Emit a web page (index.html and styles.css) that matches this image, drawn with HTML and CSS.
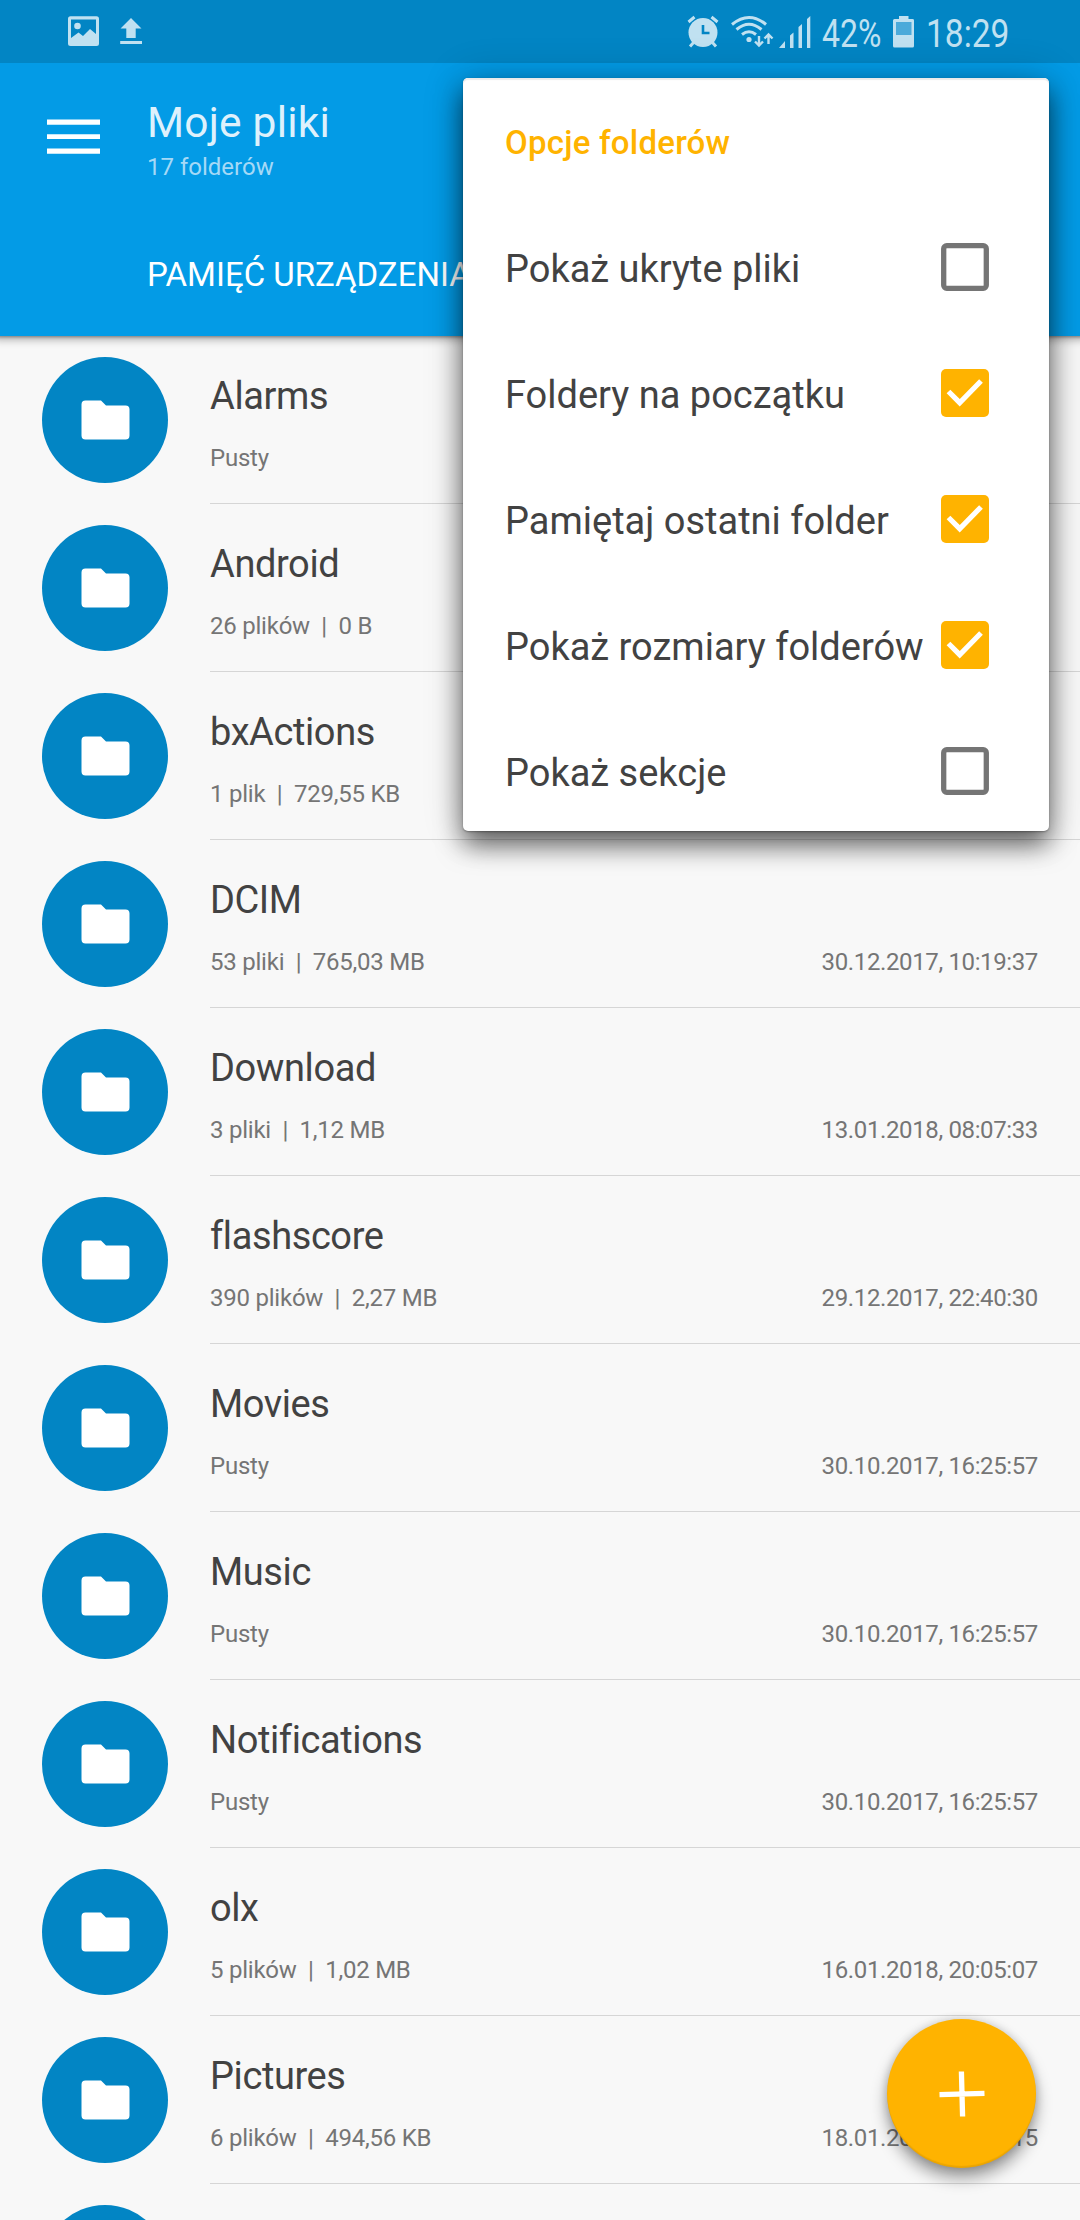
FILE: index.html
```html
<!DOCTYPE html>
<html lang="pl">
<head>
<meta charset="utf-8">
<title>Moje pliki</title>
<link rel="stylesheet" href="styles.css">
</head>
<body>
<svg class="defs" width="0" height="0">
  <symbol id="folder" viewBox="0 0 49 40"><path d="M4.500 0.500H20L25 5.500H44.500a4 4 0 0 1 4 4V35.500a4 4 0 0 1-4 4H4.500a4 4 0 0 1-4-4V4.500a4 4 0 0 1 4-4z"/></symbol>
  <symbol id="box-off" viewBox="0 0 48 48"><rect x="2.700" y="2.700" width="42.600" height="42.600" rx="3" fill="none" stroke="#757575" stroke-width="5.300"/></symbol>
  <symbol id="box-on" viewBox="0 0 48 48"><rect width="48" height="48" rx="5" fill="#ffb300"/><path d="M7.500 22.500 18.700 33.700 40 12" fill="none" stroke="#fff" stroke-width="5.200"/></symbol>
</svg>
<div class="screen">
  <div class="status">
    <svg class="status-image" width="32" height="63" viewBox="68 0 32 63"><path fill-rule="evenodd" d="M70.500 16.300H96.500a2.500 2.500 0 0 1 2.500 2.500V43.500a2.500 2.500 0 0 1-2.500 2.500H70.500a2.500 2.500 0 0 1-2.500-2.500V18.800a2.500 2.500 0 0 1 2.500-2.500zM71 19.500V38L78.500 32.500 83 36 90 29 96 34V19.500z"/><circle cx="77.500" cy="26" r="3.300"/></svg>
    <svg class="status-upload" width="22" height="63" viewBox="119.500 0 22 63"><path d="M130.500 18 141 28.500H135.200V38H125.800V28.500H120zM119.700 41H141.500V44H119.700z"/></svg>
    <svg class="status-alarm" width="32" height="63" viewBox="687 0 32 63"><circle cx="703" cy="32.500" r="14.500"/><path class="line" stroke-width="3" d="M688.500 22 694.500 17M717.500 22 711.500 17M694 42 690 46.500M712 42 716 46.500"/><path d="M703 25V33H709.500" class="hands"/></svg>
    <svg class="status-wifi" width="43" height="63" viewBox="731 0 43 63"><path class="line" stroke-width="3" d="M732 24.500Q749 10.500 766 24.500M736.500 29.500Q749 19 761.500 29.500M742 34.500Q749 29 756 34.500"/><circle cx="749" cy="39.500" r="2.600"/><path class="line" stroke-width="2.400" d="M759 36V46M755 41.500 759 45.500 763 41.500M768.500 44V34M764.500 38.500 768.500 34.500 772.500 38.500"/></svg>
    <svg class="status-signal" width="32" height="63" viewBox="779 0 32 63"><path d="M785 41V48H779zM790 35.500 793.500 32.500V48H790zM798.500 27 802 24V48H798.500zM807 19 810.300 16V48H807z"/></svg>
    <div class="status-percent"><span>42%</span></div>
    <svg class="status-battery" width="21" height="63" viewBox="893 0 21 63"><path d="M899 16H908.500V19H912.500a1.500 1.500 0 0 1 1.500 1.500V46a1.500 1.500 0 0 1-1.500 1.500H894.500a1.500 1.500 0 0 1-1.500-1.500V20.500a1.500 1.500 0 0 1 1.500-1.500H899z"/><path d="M896 22H911.500V35H896z" fill="#4baada"/></svg>
    <div class="status-clock"><span>18:29</span></div>
  </div>
  <header class="appbar">
    <svg class="menu" width="53" height="36" viewBox="0 0 53 36"><path d="M0 .5H53V5.800H0zM0 15.200H53V20H0zM0 29.500H53V34.800H0z"/></svg>
    <div class="heading">
      <h1>Moje pliki</h1>
      <div class="count">17 folderów</div>
      <div class="tab">PAMIĘĆ URZĄDZENIA</div>
    </div>
  </header>
  <main class="list">
    <div class="row"><div class="avatar"><svg><use href="#folder"/></svg></div><div class="info"><div class="name">Alarms</div><div class="meta"><span>Pusty</span></div></div></div>
    <div class="row"><div class="avatar"><svg><use href="#folder"/></svg></div><div class="info"><div class="name">Android</div><div class="meta"><span>26 plików  |  0 B</span></div></div></div>
    <div class="row"><div class="avatar"><svg><use href="#folder"/></svg></div><div class="info"><div class="name">bxActions</div><div class="meta"><span>1 plik  |  729,55 KB</span></div></div></div>
    <div class="row"><div class="avatar"><svg><use href="#folder"/></svg></div><div class="info"><div class="name">DCIM</div><div class="meta"><span>53 pliki  |  765,03 MB</span><span class="date">30.12.2017, 10:19:37</span></div></div></div>
    <div class="row"><div class="avatar"><svg><use href="#folder"/></svg></div><div class="info"><div class="name">Download</div><div class="meta"><span>3 pliki  |  1,12 MB</span><span class="date">13.01.2018, 08:07:33</span></div></div></div>
    <div class="row"><div class="avatar"><svg><use href="#folder"/></svg></div><div class="info"><div class="name">flashscore</div><div class="meta"><span>390 plików  |  2,27 MB</span><span class="date">29.12.2017, 22:40:30</span></div></div></div>
    <div class="row"><div class="avatar"><svg><use href="#folder"/></svg></div><div class="info"><div class="name">Movies</div><div class="meta"><span>Pusty</span><span class="date">30.10.2017, 16:25:57</span></div></div></div>
    <div class="row"><div class="avatar"><svg><use href="#folder"/></svg></div><div class="info"><div class="name">Music</div><div class="meta"><span>Pusty</span><span class="date">30.10.2017, 16:25:57</span></div></div></div>
    <div class="row"><div class="avatar"><svg><use href="#folder"/></svg></div><div class="info"><div class="name">Notifications</div><div class="meta"><span>Pusty</span><span class="date">30.10.2017, 16:25:57</span></div></div></div>
    <div class="row"><div class="avatar"><svg><use href="#folder"/></svg></div><div class="info"><div class="name">olx</div><div class="meta"><span>5 plików  |  1,02 MB</span><span class="date">16.01.2018, 20:05:07</span></div></div></div>
    <div class="row"><div class="avatar"><svg><use href="#folder"/></svg></div><div class="info"><div class="name">Pictures</div><div class="meta"><span>6 plików  |  494,56 KB</span><span class="date">18.01.2018, 18:28:15</span></div></div></div>
    <div class="row"><div class="avatar"></div></div>
  </main>
  <button class="fab" aria-label="Dodaj"><svg width="46" height="46" viewBox="0 0 46 46"><path d="M23 0.500V45.500M0.500 23H45.500" stroke="#fff" stroke-width="5.300" transform="rotate(-1.500 23 23)"/></svg></button>
  <div class="popup">
    <div class="popup-title">Opcje folderów</div>
    <div class="option"><span>Pokaż ukryte pliki</span><svg><use href="#box-off"/></svg></div>
    <div class="option"><span>Foldery na początku</span><svg><use href="#box-on"/></svg></div>
    <div class="option"><span>Pamiętaj ostatni folder</span><svg><use href="#box-on"/></svg></div>
    <div class="option"><span>Pokaż rozmiary folderów</span><svg><use href="#box-on"/></svg></div>
    <div class="option"><span>Pokaż sekcje</span><svg><use href="#box-off"/></svg></div>
  </div>
</div>
</body>
</html>
```
FILE: styles.css
```css
* { box-sizing: border-box; }
body { margin: 0; font-family: Roboto, "Liberation Sans", sans-serif; background: #f8f8f8; }
.defs { position: absolute; }
.screen { position: relative; width: 1080px; height: 2220px; overflow: hidden; background: #f8f8f8; }

.status { display: flex; height: 63px; padding: 0 67px 0 68px; background: #0285c4; color: #c0e1f1; }
.status svg { flex: none; fill: #c0e1f1; }
.status .line { fill: none; stroke: #c0e1f1; }
.status .hands { fill: none; stroke: #0285c4; stroke-width: 2.6px; }
.status-percent, .status-clock { flex: none; font-size: 38.500px; line-height: 67px; white-space: nowrap; }
.status-percent span, .status-clock span { display: inline-block; transform-origin: 0 50%; transform: scaleX(.83); }
.status-clock span { transform: scaleX(.87); }
.status-upload { margin-left: 20px; }
.status-alarm { margin-left: auto; }
.status-wifi { margin-left: 12px; }
.status-signal { margin-left: 5px; }
.status-percent { width: 62px; margin-left: 11px; }
.status-battery { margin-left: 9px; }
.status-clock { width: 87px; margin-left: 12px; }

.appbar { position: relative; display: flex; height: 273px; padding-left: 47px; background: #039be6; box-shadow: 0 -5px 3px 6px rgba(0,0,0,.35), 0 -2px 8px 6px rgba(0,0,0,.28); clip-path: inset(0 0 -20px 0); color: #fff; }
.menu { flex: none; margin-top: 56px; fill: #fff; }
.heading { margin-left: 47px; padding-top: 35px; white-space: nowrap; }
.heading h1 { margin: 0; font-size: 42.500px; font-weight: 400; line-height: 50px; letter-spacing: .2px; color: #def1fc; }
.count { margin-top: 5px; font-size: 24px; line-height: 28px; color: #a5d9f6; }
.tab { margin-top: 74px; font-size: 33px; line-height: 40px; }

.row { display: flex; height: 168px; padding-left: 42px; }
.avatar { display: flex; flex: none; align-items: center; justify-content: center; width: 126px; height: 126px; margin: 21px 42px 0 0; border-radius: 50%; background: #0285c4; }
.avatar svg { width: 49px; height: 40px; fill: #fff; }
.info { flex: 1; padding: 38px 42px 0 0; border-bottom: 1px solid #d6d6d6; }
.name { font-size: 38px; line-height: 44px; letter-spacing: -.4px; color: #424242; }
.meta { display: flex; justify-content: space-between; margin-top: 26px; font-size: 24px; line-height: 28px; letter-spacing: -.23px; white-space: pre; color: #757575; }
.date { letter-spacing: -.37px; }

.fab { position: absolute; left: 887px; top: 2019px; display: flex; align-items: center; justify-content: center; width: 149px; height: 149px; padding: 0; border: 0; border-radius: 50%; background: #ffb300; box-shadow: inset 0 -2px 1px rgba(0,0,0,.08), 0 0 8px rgba(0,0,0,.16), 0 10px 16px rgba(0,0,0,.38); }

.popup { position: absolute; left: 463px; top: 78px; width: 586px; height: 753px; padding: 0 60px 0 42px; border-radius: 5px; background: #fff; box-shadow: inset 0 2px 1px #eaeaea, 0 1px 2px rgba(0,0,0,.3), 0 0 42px rgba(0,0,0,.2), 0 14px 26px rgba(0,0,0,.58); }
.popup-title { height: 126px; padding-top: 45px; font-size: 33px; font-weight: 500; line-height: 40px; letter-spacing: .22px; color: #ffb300; }
.option { display: flex; align-items: center; justify-content: space-between; height: 126px; font-size: 38px; white-space: nowrap; color: #424242; }
.option span { padding-top: 3px; }
.option svg { flex: none; width: 48px; height: 48px; }
```
